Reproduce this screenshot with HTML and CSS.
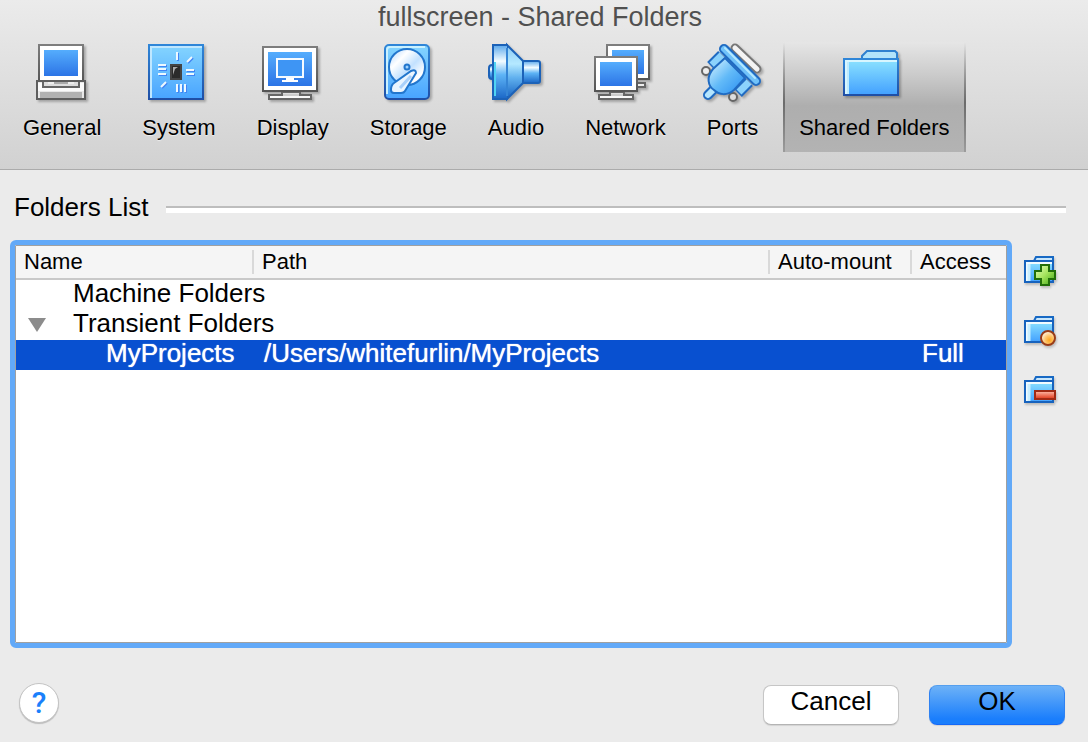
FILE: index.html
```html
<!DOCTYPE html>
<html lang="en">
<head>
<meta charset="utf-8">
<title>fullscreen - Shared Folders</title>
<link rel="stylesheet" href="styles.css">
</head>
<body>
<svg class="defs" width="0" height="0" aria-hidden="true">
  <defs>
    <linearGradient id="screen" x1="0" y1="0" x2="0" y2="1"><stop offset="0" stop-color="#55adfd"/><stop offset="1" stop-color="#2c74e6"/></linearGradient>
    <linearGradient id="sky" x1="0" y1="0" x2="0" y2="1"><stop offset="0" stop-color="#85d5ff"/><stop offset="1" stop-color="#48a4ff"/></linearGradient>
    <linearGradient id="edge" x1="0" y1="0" x2="0" y2="1"><stop offset="0" stop-color="#2f86d8"/><stop offset="1" stop-color="#1f4fa6"/></linearGradient>
    <linearGradient id="grayedge" x1="0" y1="0" x2="0" y2="1"><stop offset="0" stop-color="#7d7d7d"/><stop offset="1" stop-color="#555"/></linearGradient>
    <linearGradient id="horn" x1="0" y1="0" x2="0" y2="1"><stop offset="0" stop-color="#8ccaf5"/><stop offset=".35" stop-color="#b5e9ff"/><stop offset=".6" stop-color="#62b2ef"/><stop offset="1" stop-color="#1460c0"/></linearGradient>
    <linearGradient id="tube" x1="0" y1="0" x2="0" y2="1"><stop offset="0" stop-color="#5aa8ec"/><stop offset=".3" stop-color="#f4fcff"/><stop offset=".55" stop-color="#5eb4f6"/><stop offset="1" stop-color="#1a66c6"/></linearGradient>
    <linearGradient id="folder" x1="0" y1="0" x2="0" y2="1"><stop offset="0" stop-color="#8de4ff"/><stop offset="1" stop-color="#42a0ff"/></linearGradient>
    <linearGradient id="disc" x1="0" y1="0" x2="1" y2="1"><stop offset="0" stop-color="#a8d3ff"/><stop offset=".3" stop-color="#fff"/><stop offset=".55" stop-color="#c2e1ff"/><stop offset=".8" stop-color="#fff"/><stop offset="1" stop-color="#9ccfff"/></linearGradient>
    <linearGradient id="plug" x1="0" y1="0" x2="1" y2="1"><stop offset="0" stop-color="#e4f9ff"/><stop offset=".5" stop-color="#62baf8"/><stop offset="1" stop-color="#268cf0"/></linearGradient>
    <linearGradient id="plus" x1="0" y1="0" x2="1" y2="1"><stop offset="0" stop-color="#e8ffc0"/><stop offset=".5" stop-color="#a4e45c"/><stop offset="1" stop-color="#38a010"/></linearGradient>
    <radialGradient id="dot" cx=".6" cy=".65" r=".6"><stop offset="0" stop-color="#ffa51c"/><stop offset=".5" stop-color="#ffc56a"/><stop offset="1" stop-color="#fff0d8"/></radialGradient>
    <linearGradient id="minus" x1="0" y1="0" x2="0" y2="1"><stop offset="0" stop-color="#ffc0ae"/><stop offset="1" stop-color="#e03414"/></linearGradient>
    <symbol id="smallfolder" viewBox="0 0 32 32">
      <path d="M10 6 L12 2 H29 V8" fill="#c8e6fb" stroke="#1769c4" stroke-width="2"/>
      <rect x="1" y="6" width="28" height="21" fill="url(#folder)" stroke="#1763be" stroke-width="2"/>
      <path d="M3 26V8H28" fill="none" stroke="#f1fbff" stroke-width="2"/>
      <path d="M5 26V9" stroke="#c9eeff" stroke-width="3"/>
    </symbol>
  </defs>
</svg>

<header class="titlebar">
  <h1 class="title">fullscreen - Shared Folders</h1>
  <nav class="tabs" aria-label="Settings">
    <button class="tab" type="button">
      <svg class="tab-icon" viewBox="0 0 64 64" aria-hidden="true">
        <rect x="9" y="3" width="44" height="37" fill="#fff" stroke="url(#grayedge)" stroke-width="2"/>
        <rect x="14" y="8" width="34" height="26" fill="url(#screen)"/>
        <rect x="7" y="39" width="48" height="18" fill="#e8e8e8" stroke="#5e5e5e" stroke-width="2"/>
        <path d="M8 41h46v8H8z" fill="#fbfbfb"/><path d="M10 50h42v6H10z" fill="#b2b2b2"/>
        <path d="M13 40v5h36v-5" fill="#ddd" stroke="#666" stroke-width="2"/><path d="M18 41h26" stroke="#eee" stroke-width="2"/><path d="M24 41h14" stroke="#aaa" stroke-width="2"/>
      </svg>
      <span class="tab-label">General</span>
    </button>
    <button class="tab" type="button">
      <svg class="tab-icon" viewBox="2 0 64 64" aria-hidden="true">
        <rect x="4" y="3" width="54" height="54" fill="url(#sky)" stroke="url(#edge)" stroke-width="2"/>
        <path d="M6 56V5h51" fill="none" stroke="#bfe7ff" stroke-width="2"/>
        <path d="M32 10v8M42 20l5-5M13 23h8M13 27h8M13 32h8M41 28h8M41 32h8M16 45l5-5M32 42v8M36 42v8M40 42v8" transform="translate(1 1)" stroke="#4285f4" stroke-width="2"/>
        <path d="M32 10v8M42 20l5-5M13 23h8M13 27h8M13 32h8M41 28h8M41 32h8M16 45l5-5M32 42v8M36 42v8M40 42v8" stroke="#edf8ff" stroke-width="2"/>
        <rect x="26" y="23" width="10" height="14" fill="#2b2b2b" stroke="#444" stroke-width="2"/><path d="M28 33v-8h5l-3 2z" fill="#aaa"/>
      </svg>
      <span class="tab-label">System</span>
    </button>
    <button class="tab" type="button">
      <svg class="tab-icon" viewBox="2 0 64 64" aria-hidden="true">
        <rect x="23" y="50" width="18" height="5" fill="#ddd" stroke="#666" stroke-width="2"/>
        <rect x="10" y="53" width="42" height="4" fill="#f8f8f8" stroke="#666" stroke-width="2"/><path d="M24 53h16" stroke="#ccc" stroke-width="2"/>
        <rect x="4" y="5" width="54" height="44" fill="#fff" stroke="url(#grayedge)" stroke-width="2"/>
        <rect x="9" y="10" width="44" height="34" fill="url(#screen)"/>
        <rect x="18" y="17" width="26" height="18" fill="#3e95f4" stroke="#f6fbff" stroke-width="2"/>
        <path d="M27 36h8v2h4v2H23v-2h4z" fill="#fff"/>
      </svg>
      <span class="tab-label">Display</span>
    </button>
    <button class="tab" type="button">
      <svg class="tab-icon" viewBox="0 0 64 64" aria-hidden="true">
        <rect x="9" y="3" width="44" height="54" rx="4" fill="url(#sky)" stroke="url(#edge)" stroke-width="2"/>
        <path d="M11 52V8q0-3 3-3h35" fill="none" stroke="#c9f1ff" stroke-width="2"/>
        <circle cx="31" cy="25" r="18" fill="url(#disc)" stroke="#2276cd" stroke-width="2"/>
        <circle cx="31" cy="25" r="2.500" fill="#9fd3ff" stroke="#2276cd" stroke-width="2"/>
        <path d="M35 29q5-2 5 2L29 49q-1 2-4 2h-7q-3 0-3-3 0-5 3-7z" fill="#eaf5ff" stroke="#2276cd" stroke-width="2"/>
        <path d="M35 34L24 46" stroke="#a9d0fa" stroke-width="3"/>
      </svg>
      <span class="tab-label">Storage</span>
    </button>
    <button class="tab" type="button">
      <svg class="tab-icon" viewBox="0 0 64 64" aria-hidden="true">
        <rect x="5" y="23" width="7" height="14" rx="3" fill="url(#tube)" stroke="#1c62b8" stroke-width="2"/>
        <rect x="37" y="19" width="19" height="22" rx="2" fill="url(#tube)" stroke="#1c62b8" stroke-width="2"/>
        <path d="M23 3L39 19V41L23 57z" fill="url(#horn)" stroke="#1c62b8" stroke-width="2"/>
        <rect x="9" y="3" width="14" height="54" rx="1" fill="url(#tube)"/>
        <path d="M24 3H9V57H24" fill="none" stroke="#1c62b8" stroke-width="2"/>
        <path d="M11 20v34" stroke="#50d4f4" stroke-width="2"/><path d="M23 6v48" stroke="#3585d5" stroke-width="2"/>
      </svg>
      <span class="tab-label">Audio</span>
    </button>
    <button class="tab" type="button">
      <svg class="tab-icon" viewBox="2 0 64 64" aria-hidden="true">
        <rect x="34" y="41" width="20" height="4" fill="#eee" stroke="#666" stroke-width="2"/>
        <rect x="16" y="3" width="42" height="34" fill="#fff" stroke="url(#grayedge)" stroke-width="2"/>
        <rect x="21" y="8" width="32" height="24" fill="url(#screen)"/>
        <rect x="19" y="50" width="14" height="5" fill="#ddd" stroke="#666" stroke-width="2"/>
        <rect x="8" y="53" width="34" height="4" fill="#f8f8f8" stroke="#666" stroke-width="2"/><path d="M20 53h12" stroke="#ccc" stroke-width="2"/>
        <rect x="4" y="15" width="42" height="34" fill="#fff" stroke="url(#grayedge)" stroke-width="2"/>
        <rect x="9" y="20" width="32" height="24" fill="url(#screen)"/>
      </svg>
      <span class="tab-label">Network</span>
    </button>
    <button class="tab" type="button">
      <svg class="tab-icon" viewBox="0 0 64 64" aria-hidden="true">
        <g stroke-linecap="round">
          <path d="M35 6L57 27" stroke="#777" stroke-width="9"/><path d="M35 6L57 27" stroke="#f4f4f4" stroke-width="5"/>
          <circle cx="6" cy="29" r="4" fill="#eee" stroke="#666" stroke-width="2"/><circle cx="33" cy="55" r="4" fill="#ddd" stroke="#666" stroke-width="2"/>
          <path d="M13 48L8 53" stroke="#206bc2" stroke-width="10"/><path d="M13 48L8 53" stroke="#b5e6ff" stroke-width="6"/>
          <path d="M22 13L11 24M49 40L38 51" stroke="#206bc2" stroke-width="11" stroke-linecap="butt"/><path d="M22 13L12 23M49 40L39 50" stroke="#8bd2fc" stroke-width="7" stroke-linecap="butt"/>
          <path d="M25 16L13 27C6 35 8 44 14 48C19 53 27 54 34 48L45 36z" fill="url(#plug)" stroke="#206bc2" stroke-width="2"/>
          <path d="M24 7L56 39" stroke="#206bc2" stroke-width="10"/><path d="M24 7L56 39" stroke="#70c2fa" stroke-width="6"/><path d="M25 6L55 36" stroke="#b4e9ff" stroke-width="2"/>
        </g>
      </svg>
      <span class="tab-label">Ports</span>
    </button>
    <button class="tab tab-selected" type="button" aria-current="page">
      <svg class="tab-icon" viewBox="2 0 64 64" aria-hidden="true">
        <path d="M22 18v-4l5-5h28l2 2v7" fill="#b2e3fa" stroke="#2f80cf" stroke-width="2"/>
        <rect x="4" y="17" width="54" height="36" fill="url(#folder)" stroke="url(#edge)" stroke-width="2"/>
        <path d="M6 52V19h51" fill="none" stroke="#d7f6ff" stroke-width="2"/><path d="M8 52V20" stroke="#bdebff" stroke-width="2"/>
      </svg>
      <span class="tab-label">Shared Folders</span>
    </button>
  </nav>
</header>

<main class="content">
  <h2 class="group-title">Folders List</h2>
  <div class="folders">
    <div class="list" tabindex="0">
      <table class="table">
        <colgroup><col class="col-name"><col><col class="col-auto"><col class="col-access"></colgroup>
        <thead>
          <tr><th scope="col"><span class="head">Name</span></th><th scope="col"><span class="head">Path</span></th><th scope="col"><span class="head">Auto-mount</span></th><th scope="col"><span class="head">Access</span></th></tr>
        </thead>
        <tbody>
          <tr><td class="root">Machine Folders</td><td></td><td></td><td></td></tr>
          <tr><td><div class="branch"><button class="disclosure" type="button" aria-label="Collapse Transient Folders" aria-expanded="true"><svg class="triangle" viewBox="0 0 18 14" aria-hidden="true"><path d="M0 0h18L9 14z" fill="#8c8c8c"/></svg></button>Transient Folders</div></td><td></td><td></td><td></td></tr>
          <tr class="selected"><td class="leaf">MyProjects</td><td>/Users/whitefurlin/MyProjects</td><td></td><td>Full</td></tr>
        </tbody>
      </table>
    </div>
    <div class="actions">
      <button class="action" type="button" aria-label="Add shared folder">
        <svg class="action-icon" viewBox="0 0 32 32" aria-hidden="true"><use href="#smallfolder"/><path d="M17 10h8v6h6v8h-6v6h-8v-6h-6v-8h6z" fill="url(#plus)" stroke="#226e0a" stroke-width="2"/></svg>
      </button>
      <button class="action" type="button" aria-label="Edit shared folder">
        <svg class="action-icon" viewBox="0 0 32 32" aria-hidden="true"><use href="#smallfolder"/><circle cx="24" cy="23" r="7" fill="url(#dot)" stroke="#9a3c18" stroke-width="2"/></svg>
      </button>
      <button class="action" type="button" aria-label="Remove shared folder">
        <svg class="action-icon" viewBox="0 0 32 32" aria-hidden="true"><use href="#smallfolder"/><rect x="11" y="16" width="20" height="8" fill="url(#minus)" stroke="#a02a14" stroke-width="2"/></svg>
      </button>
    </div>
  </div>
</main>

<footer class="footer">
  <button class="help" type="button" aria-label="Help">?</button>
  <div class="choices">
    <button class="button" type="button">Cancel</button>
    <button class="button button-default" type="button">OK</button>
  </div>
</footer>
</body>
</html>
```

FILE: styles.css
```css
* { box-sizing: border-box; }

body {
  margin: 0;
  min-height: 100vh;
  display: flex;
  flex-direction: column;
  background: #ebebeb;
  color: #000;
  font: 26px/30px "Liberation Sans", Arial, sans-serif;
}

button {
  margin: 0;
  padding: 0;
  border: 0;
  background: none;
  color: inherit;
  font: inherit;
}

.defs { position: absolute; }

.titlebar {
  padding-bottom: 17px;
  border-bottom: 1px solid #ababab;
  background: linear-gradient(#ebebeb, #d1d1d1);
}

.title {
  margin: 0 8px 8px 0;
  color: #505050;
  font-size: 27px;
  font-weight: 400;
  line-height: 34px;
  text-align: center;
}

.tabs {
  display: flex;
  gap: 9px;
  padding-left: 7px;
}

.tab {
  display: flex;
  flex-direction: column;
  align-items: center;
  gap: 9px;
  padding: 0 16px 11px;
  font-size: 22px;
  line-height: 26px;
  white-space: nowrap;
}

.tab-label { text-shadow: 0 1px 1px rgba(255, 255, 255, .6); }

.tab-selected {
  background:
    linear-gradient(rgba(90, 90, 90, 0), rgba(90, 90, 90, .8) 55%, rgba(140, 140, 140, .6)) left / 2px 100% no-repeat,
    linear-gradient(rgba(90, 90, 90, 0), rgba(90, 90, 90, .8) 55%, rgba(140, 140, 140, .6)) right / 2px 100% no-repeat,
    linear-gradient(#e6e6e6, #cbcbcb 30%, #aeaeae 58%, #b3b3b3);
}

.tab-selected .tab-label { text-shadow: none; }

.tab-icon {
  width: 64px;
  height: 64px;
  margin: 0 -8px;
  filter: drop-shadow(2px 2px 1px rgba(0, 0, 0, .25));
}

.content {
  flex: 1;
  display: flex;
  flex-direction: column;
  gap: 16px;
  padding: 20px 22px 0 10px;
}

.group-title {
  display: flex;
  align-items: center;
  gap: 18px;
  margin: 0 0 0 4px;
  font-size: 26px;
  font-weight: 400;
  line-height: 34px;
}

.group-title::after {
  content: "";
  flex: 1;
  height: 5px;
  margin-top: 5px;
  border-top: 2px solid #bdbdbd;
  background: #fff;
}

.folders {
  flex: 1;
  display: flex;
  gap: 12px;
}

.list {
  flex: 1;
  border: 1px solid #a0a0a0;
  margin: 5px;
  outline: 5px solid #62a9f8;
  border-radius: 1px;
  background: #fff;
}

.table {
  width: 100%;
  table-layout: fixed;
  border-collapse: separate;
  border-spacing: 0;
}

.col-name { width: 238px; }
.col-auto { width: 142px; }
.col-access { width: 94px; }

th {
  padding: 4px 0;
  border-bottom: 2px solid #c9c9c9;
  background: #f5f5f5;
  font-size: 22px;
  font-weight: 400;
  line-height: 24px;
  text-align: left;
}

.head {
  display: block;
  padding-left: 8px;
  border-right: 2px solid #d9d9d9;
}

th:last-child .head { border-right: 0; }

td {
  height: 30px;
  padding: 0 0 4px 10px;
  line-height: 26px;
  white-space: nowrap;
}

td.root { padding-left: 57px; }
td.leaf { padding-left: 90px; }
td:has(.branch) { padding-left: 12px; }

.branch {
  display: flex;
  align-items: center;
  gap: 27px;
}

.disclosure {
  display: flex;
  padding-top: 4px;
}

.triangle {
  width: 18px;
  height: 14px;
}

.selected {
  background: #0850d0;
  color: #fff;
  text-shadow: 0 0 1px #fff;
}

.actions {
  display: flex;
  flex-direction: column;
  gap: 28px;
  width: 42px;
  padding-top: 15px;
}

.action {
  width: 32px;
  height: 32px;
}

.action-icon {
  display: block;
  width: 32px;
  height: 32px;
  overflow: visible;
  filter: drop-shadow(1px 2px 1px rgba(0, 0, 0, .2));
}

.footer {
  display: flex;
  justify-content: space-between;
  padding: 35px 23px 17px 19px;
}

.choices {
  display: flex;
  gap: 30px;
  padding-top: 2px;
}

.help {
  width: 40px;
  height: 40px;
  border: 1px solid #c4c4c4;
  border-radius: 50%;
  background: #fff;
  box-shadow: 0 1px 1px rgba(0, 0, 0, .2);
  color: #1a80fb;
  font: 500 30px/38px Roboto, "Liberation Sans", sans-serif;
}

.button {
  width: 136px;
  height: 40px;
  padding-bottom: 8px;
  border: 1px solid #c6c6c6;
  border-bottom-color: #b4b4b4;
  border-radius: 8px;
  background: #fff;
  box-shadow: 0 1px 1px rgba(0, 0, 0, .1);
}

.button-default {
  border-color: #559fee #2f82f2 #1468f8;
  background: linear-gradient(#6fb3f7, #1a7efc 85%) border-box;
}
```
